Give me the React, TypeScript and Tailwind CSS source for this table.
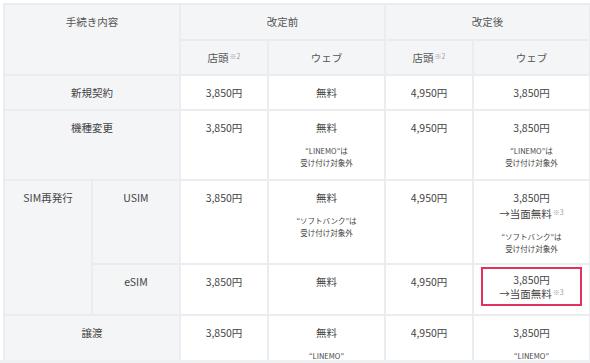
import React from 'react';

const cell = 'border-2 border-[#eaecef] align-top text-center pt-[9px] px-1';
const grayCell = `${cell} bg-[#f4f5f7]`;

const Sup: React.FC<{ n: string }> = ({ n }) => (
  <span className="relative -top-[3px] text-[7px] text-[#a0a0a0] ml-[1px] leading-none">※{n}</span>
);

const Note: React.FC<{ lines: string[] }> = ({ lines }) => (
  <div className="mt-[9px] text-[7.5px] leading-[11.5px] text-[#444]">
    {lines.map((l) => (
      <div key={l}>{l}</div>
    ))}
  </div>
);

const App: React.FC = () => {
  return (
    <div
      className="w-[590px] h-[363px] bg-white overflow-hidden text-[#444]"
      style={{ fontFamily: '"Noto Sans CJK JP", "Noto Sans", sans-serif' }}
    >
      <div className="h-[360px] overflow-hidden pl-[3px] pt-[3px]">
        <table className="table-fixed border-collapse w-[586px] text-[10.5px] leading-[16px]">
          <colgroup>
            <col className="w-[88px]" />
            <col className="w-[88px]" />
            <col className="w-[88px]" />
            <col className="w-[117px]" />
            <col className="w-[88px]" />
            <col className="w-[117px]" />
          </colgroup>
          <thead>
            <tr className="h-[36px]">
              <th colSpan={2} rowSpan={2} className={`${grayCell} font-normal text-[#555]`}>
                手続き内容
              </th>
              <th colSpan={2} className={`${grayCell} font-normal text-[#555]`}>
                改定前
              </th>
              <th colSpan={2} className={`${grayCell} font-normal text-[#555]`}>
                改定後
              </th>
            </tr>
            <tr className="h-[35px]">
              <th className={`${grayCell} font-normal text-[#555]`}>
                店頭<Sup n="2" />
              </th>
              <th className={`${grayCell} font-normal text-[#555]`}>ウェブ</th>
              <th className={`${grayCell} font-normal text-[#555]`}>
                店頭<Sup n="2" />
              </th>
              <th className={`${grayCell} font-normal text-[#555]`}>ウェブ</th>
            </tr>
          </thead>
          <tbody>
            <tr className="h-[35px]">
              <td colSpan={2} className={grayCell}>新規契約</td>
              <td className={cell}>3,850円</td>
              <td className={cell}>無料</td>
              <td className={cell}>4,950円</td>
              <td className={cell}>3,850円</td>
            </tr>
            <tr className="h-[70px]">
              <td colSpan={2} className={grayCell}>機種変更</td>
              <td className={cell}>3,850円</td>
              <td className={cell}>
                無料
                <Note lines={['“LINEMO”は', '受け付け対象外']} />
              </td>
              <td className={cell}>4,950円</td>
              <td className={cell}>
                3,850円
                <Note lines={['“LINEMO”は', '受け付け対象外']} />
              </td>
            </tr>
            <tr className="h-[84px]">
              <td rowSpan={2} className={grayCell}>SIM再発行</td>
              <td className={grayCell}>USIM</td>
              <td className={cell}>3,850円</td>
              <td className={cell}>
                無料
                <Note lines={['“ソフトバンク”は', '受け付け対象外']} />
              </td>
              <td className={cell}>4,950円</td>
              <td className={cell}>
                <div>3,850円</div>
                <div>
                  →当面無料<Sup n="3" />
                </div>
                <Note lines={['“ソフトバンク”は', '受け付け対象外']} />
              </td>
            </tr>
            <tr className="h-[51px]">
              <td className={grayCell}>eSIM</td>
              <td className={cell}>3,850円</td>
              <td className={cell}>無料</td>
              <td className={cell}>4,950円</td>
              <td className="border-2 border-[#eaecef] align-top text-center pt-[2px] px-[7px]">
                <div className="border-2 border-[#e3315f] pt-[4px] pb-[3px] leading-[14px]">
                  <div>3,850円</div>
                  <div>
                    →当面無料<Sup n="3" />
                  </div>
                </div>
              </td>
            </tr>
            <tr className="h-[70px]">
              <td colSpan={2} className={grayCell}>譲渡</td>
              <td className={cell}>3,850円</td>
              <td className={cell}>
                無料
                <Note lines={['“LINEMO”', 'は受け付け対象外']} />
              </td>
              <td className={cell}>4,950円</td>
              <td className={cell}>
                3,850円
                <Note lines={['“LINEMO”', 'は受け付け対象外']} />
              </td>
            </tr>
          </tbody>
        </table>
      </div>
      <div className="h-[3px] bg-[#eef0f2]" />
    </div>
  );
};

export default App;
